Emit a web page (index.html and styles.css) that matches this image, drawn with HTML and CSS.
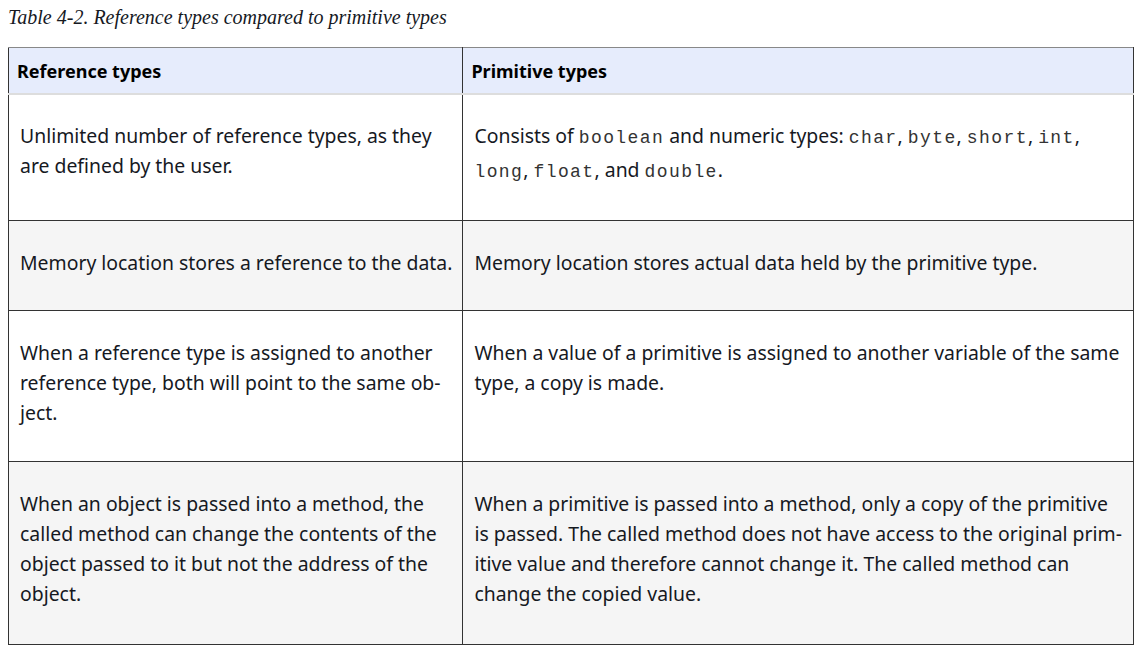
FILE: index.html
```html
<!DOCTYPE html>
<html>
<head>
<meta charset="utf-8">
<link rel="stylesheet" href="styles.css">
</head>
<body>
<p class="caption">Table 4-2. Reference types compared to primitive types</p>
<table class="cmp">
  <thead>
    <tr><th>Reference types</th><th>Primitive types</th></tr>
  </thead>
  <tbody>
    <tr class="r1">
      <td>Unlimited number of reference types, as they<br>are defined by the user.</td>
      <td>Consists of <code>boolean</code> and numeric types: <code>char</code>, <code>byte</code>, <code>short</code>, <code>int</code>,<br><code>long</code>, <code>float</code>, and <code>double</code>.</td>
    </tr>
    <tr class="alt r2">
      <td>Memory location stores a reference to the data.</td>
      <td>Memory location stores actual data held by the primitive type.</td>
    </tr>
    <tr class="r3">
      <td>When a reference type is assigned to another<br>reference type, both will point to the same ob-<br>ject.</td>
      <td>When a value of a primitive is assigned to another variable of the same<br>type, a copy is made.</td>
    </tr>
    <tr class="alt r4">
      <td>When an object is passed into a method, the<br>called method can change the contents of the<br>object passed to it but not the address of the<br>object.</td>
      <td>When a primitive is passed into a method, only a copy of the primitive<br>is passed. The called method does not have access to the original prim-<br>itive value and therefore cannot change it. The called method can<br>change the copied value.</td>
    </tr>
  </tbody>
</table>
</body>
</html>
```
FILE: styles.css
```css
body {
  margin: 8px;
  background: #fff;
  font-family: "Noto Sans", sans-serif;
  color: #16191f;
}
.caption {
  margin: 0 0 21px 0;
  font-family: "Liberation Serif", serif;
  font-style: italic;
  font-size: 20px;
  line-height: 18px;
  color: #16191f;
}
.cmp {
  width: 1126px;
  border-collapse: collapse;
  font-size: 19.4px;
}
.cmp th {
  background: #e6ecfc;
  text-align: left;
  font-weight: bold;
  font-size: 18px;
  color: #000;
  padding: 11px 8px 10px 8px;
  line-height: 24px;
  border-left: 1px solid #333;
  border-right: 1px solid #333;
  border-top: 1px solid #888;
  border-bottom: 2px solid #ddd;
}
.cmp th:first-child { width: 436px; }
.cmp td {
  vertical-align: top;
  white-space: nowrap;
  padding: 27px 10px 32px 11px;
  line-height: 30px;
  border: 1px solid #333;
}
.cmp thead + tbody tr:first-child td { border-top: none; }
.cmp .r1 td { padding-top: 26px; padding-bottom: 31px; }
.cmp .r3 td { padding-bottom: 33px; }
.cmp .r4 td { padding-bottom: 35px; }
.cmp .alt td { background: #f5f5f5; }
.cmp code {
  font-family: "Liberation Mono", monospace;
  font-size: 18px;
  letter-spacing: 1.4px;
  color: #333;
  line-height: 33px;
}
```
